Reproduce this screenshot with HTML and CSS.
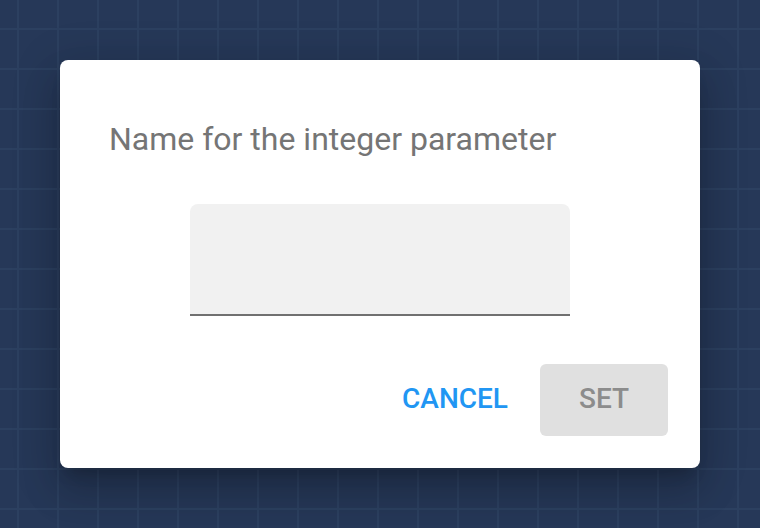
FILE: index.html
```html
<!DOCTYPE html>
<html>
<head>
<meta charset="utf-8">
<link rel="stylesheet" href="styles.css">
</head>
<body>
<div class="backdrop">
  <div class="dialog">
    <h2 class="title">Name for the integer parameter</h2>
    <div class="field-wrap">
      <div class="field"><input class="input" type="text" aria-label="Name"></div>
    </div>
    <div class="actions">
      <button class="btn btn-text">CANCEL</button>
      <button class="btn btn-disabled" disabled>SET</button>
    </div>
  </div>
</div>
</body>
</html>
```

FILE: styles.css
```css
html, body {
  margin: 0;
  padding: 0;
  width: 760px;
  height: 528px;
  overflow: hidden;
}
body {
  font-family: Roboto, "Liberation Sans", sans-serif;
  background-color: #263858;
  background-image:
    linear-gradient(to right, #2c4060 2px, transparent 2px),
    linear-gradient(to bottom, #2c4060 2px, transparent 2px);
  background-size: 40px 40px;
  background-position: 17px 28px;
}
.backdrop {
  width: 760px;
  height: 528px;
  display: flex;
  justify-content: center;
  padding-top: 60px;
  box-sizing: border-box;
}
.dialog {
  width: 640px;
  height: 408px;
  background: #fff;
  border-radius: 8px;
  box-sizing: border-box;
  padding: 0 32px 32px 49px;
  display: flex;
  flex-direction: column;
  box-shadow: 0 11px 15px -7px rgba(0,0,0,0.2), 0 24px 38px 3px rgba(0,0,0,0.14), 0 9px 46px 8px rgba(0,0,0,0.12);
}
.title {
  margin: 0;
  padding-top: 61px;
  font-size: 32px;
  font-weight: 400;
  line-height: 36px;
  color: #757575;
}
.field-wrap {
  display: flex;
  justify-content: center;
  margin-top: 47px;
  margin-left: -17px;
}
.field {
  width: 380px;
  height: 112px;
  background: #f1f1f1;
  border-radius: 8px 8px 0 0;
  border-bottom: 2px solid #707070;
  box-sizing: border-box;
}
.input {
  width: 100%;
  height: 100%;
  border: 0;
  background: transparent;
  outline: none;
  font: inherit;
  font-size: 28px;
  padding: 0 16px;
  box-sizing: border-box;
}
.actions {
  margin-top: auto;
  display: flex;
  justify-content: flex-end;
  align-items: center;
  gap: 16px;
}
.btn {
  font-family: Roboto, "Liberation Sans", sans-serif;
  font-size: 28px;
  font-weight: 500;
  border: 0;
  height: 72px;
  border-radius: 6px;
  padding: 0 16px 4px;
  cursor: pointer;
}
.btn-text {
  background: transparent;
  color: #2196f3;
}
.btn-disabled {
  width: 128px;
  background: #e0e0e0;
  color: #8c8c8c;
}
```
